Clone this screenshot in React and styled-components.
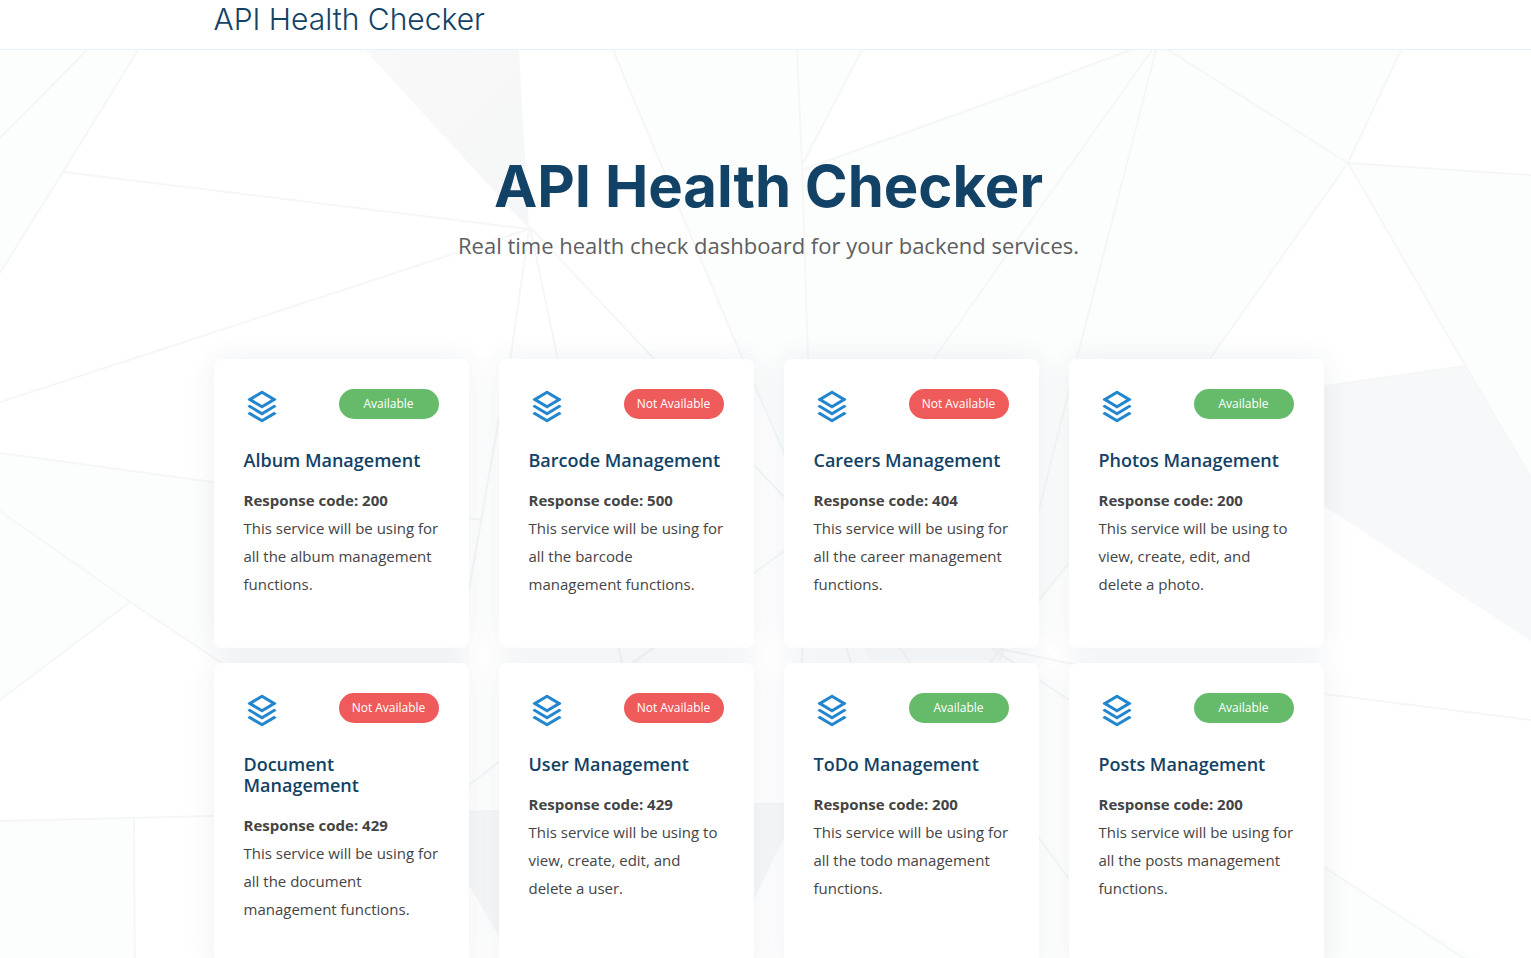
import React from "react";
import styled, { createGlobalStyle } from "styled-components";
import { RiStackLine } from "react-icons/ri";

const GlobalStyle = createGlobalStyle`
  *, *::before, *::after { box-sizing: border-box; }
  body {
    margin: 0;
    background: #fff;
    color: #444;
    font-family: "Open Sans", sans-serif;
    overflow-x: hidden;
  }
`;

const Container = styled.div`
  width: 100%;
  max-width: 1140px;
  margin: 0 auto;
  padding: 0 15px;
`;

const Header = styled.header`
  height: 50px;
  padding-left: 6px;
  background: #fff;
  border-bottom: 1px solid #e6f2fb;
`;

const Logo = styled.a`
  display: inline-block;
  color: #124265;
  font: 300 30px/38px Inter, sans-serif;
  text-decoration: none;
`;

const Hero = styled.main`
  position: relative;
  padding: 100px 0 80px 6px;
  overflow: hidden;
`;

const Backdrop = styled.svg`
  position: absolute;
  inset: 0;
  z-index: -1;
  width: 100%;
  height: 100%;
`;

const Title = styled.h1`
  margin: 0 0 10px;
  color: #124265;
  font: 700 58px/72px Inter, sans-serif;
  text-align: center;
`;

const Subtitle = styled.h2`
  margin: 0 0 100px;
  color: #5e5e5e;
  font: 400 22px/27px "Open Sans", sans-serif;
  text-align: center;
`;

const Grid = styled.div`
  display: grid;
  grid-template-columns: repeat(4, 1fr);
  gap: 15px 30px;

  @media (max-width: 1000px) {
    grid-template-columns: repeat(2, 1fr);
  }
`;

const Card = styled.article`
  padding: 30px 30px 50px;
  background: #fff;
  border-radius: 8px;
  box-shadow: 0 0 29px 0 rgba(18, 66, 101, 0.08);
`;

const CardTop = styled.div`
  display: flex;
  justify-content: space-between;
  align-items: flex-start;
  height: 36px;
  margin-bottom: 25px;
  color: #2487ce;
`;

const Badge = styled.span`
  width: 100px;
  border-radius: 15px;
  background: ${(p) => (p.$up ? "#66bb6a" : "#ef5b5b")};
  color: #fff;
  font-size: 12px;
  font-weight: 500;
  line-height: 30px;
  text-align: center;
`;

const CardTitle = styled.h3`
  margin: 0 0 15px;
  color: #124265;
  font: 600 18px/21px "Open Sans", sans-serif;
`;

const Description = styled.p`
  margin: 0;
  font-size: 15px;
  line-height: 28px;
`;

const Code = styled.strong`
  display: block;
`;

const services = [
  ["Album Management", 200, "This service will be using for all the album management functions."],
  ["Barcode Management", 500, "This service will be using for all the barcode management functions."],
  ["Careers Management", 404, "This service will be using for all the career management functions."],
  ["Photos Management", 200, "This service will be using to view, create, edit, and delete a photo."],
  ["Document Management", 429, "This service will be using for all the document management functions."],
  ["User Management", 429, "This service will be using to view, create, edit, and delete a user."],
  ["ToDo Management", 200, "This service will be using for all the todo management functions."],
  ["Posts Management", 200, "This service will be using for all the posts management functions."],
];

function Facets() {
  return (
    <Backdrop viewBox="0 50 1531 1100" preserveAspectRatio="xMidYMin slice" aria-hidden="true">
      <defs>
        <linearGradient id="shade" x1="0" y1="0" x2="1" y2="1">
          <stop offset="0" stopColor="#f9f9f9" />
          <stop offset="1" stopColor="#f5f6f7" />
        </linearGradient>
      </defs>
      <g fill="#fcfdfd">
        <path d="M0 50H138L63 172L0 273Z" />
        <path d="M613 50H862L802 168L1130 50H1401L1348 163L1210 359L1000 660H870L743 360Z" />
        <path d="M1348 163L1531 175V478Z" />
        <path d="M0 453L213 482L469 520V800L220 662L130 602L0 511Z" />
        <path d="M0 511L130 602L0 700Z" />
        <path d="M0 821L134 818L136 1150H0Z" />
        <path d="M1324 867L1550 1004V1150H1324Z" />
      </g>
      <path fill="url(#shade)" d="M365 50H519L529 229Z" />
      <g fill="#f7f8f9">
        <path d="M1200 404L1464 366L1531 478V641L1324 506L1200 430Z" />
        <path d="M400 811H530V990L469 885L400 760Z" />
        <path d="M740 804H800L754 900L730 950Z" />
      </g>
      <g fill="none" stroke="#f5f7f7" strokeWidth="2">
        <path d="M87 50L0 138M138 50L63 172L0 273M63 172L529 229L160 350L0 402" />
        <path d="M529 229L510 361L499 418L469 590M530 227L558 360L622 663M530 227L655 360L754 465L784 497L911 663" />
        <path d="M613 50L743 360L784 452L851 663M797 50L802 165L808 360L802 663M862 50L802 165M802 170L1030 88L1130 50" />
        <path d="M1152 50L1030 222L933 360L784 551L754 573L632 663M1156 50L1077 358L1039 510L1000 660M1168 50L1348 163L1401 50" />
        <path d="M1531 175L1348 163L1210 359L1069 563L1039 600L990 663M1348 163L1462 360L1531 478M1464 366L1200 404" />
        <path d="M0 453L213 482L482 520M0 511L130 602L220 662L469 800M130 602L0 700M0 821L213 816L499 811M134 818L136 1150" />
        <path d="M990 647L1068 663L1324 694L1531 720M990 647L1069 700L1324 867L1462 957L1560 1010M1039 838L1069 879M469 785L499 762L655 647M754 804H784" />
      </g>
    </Backdrop>
  );
}

export default function App() {
  return (
    <>
      <GlobalStyle />
      <Header>
        <Container>
          <Logo href="#">API Health Checker</Logo>
        </Container>
      </Header>
      <Hero>
        <Facets />
        <Container>
          <Title>API Health Checker</Title>
          <Subtitle>Real time health check dashboard for your backend services.</Subtitle>
          <Grid>
            {services.map(([name, code, text]) => (
              <Card key={name}>
                <CardTop>
                  <RiStackLine size={36} aria-hidden="true" />
                  <Badge $up={code === 200}>{code === 200 ? "Available" : "Not Available"}</Badge>
                </CardTop>
                <CardTitle>{name}</CardTitle>
                <Description>
                  <Code>Response code: {code}</Code>
                  {text}
                </Description>
              </Card>
            ))}
          </Grid>
        </Container>
      </Hero>
    </>
  );
}
